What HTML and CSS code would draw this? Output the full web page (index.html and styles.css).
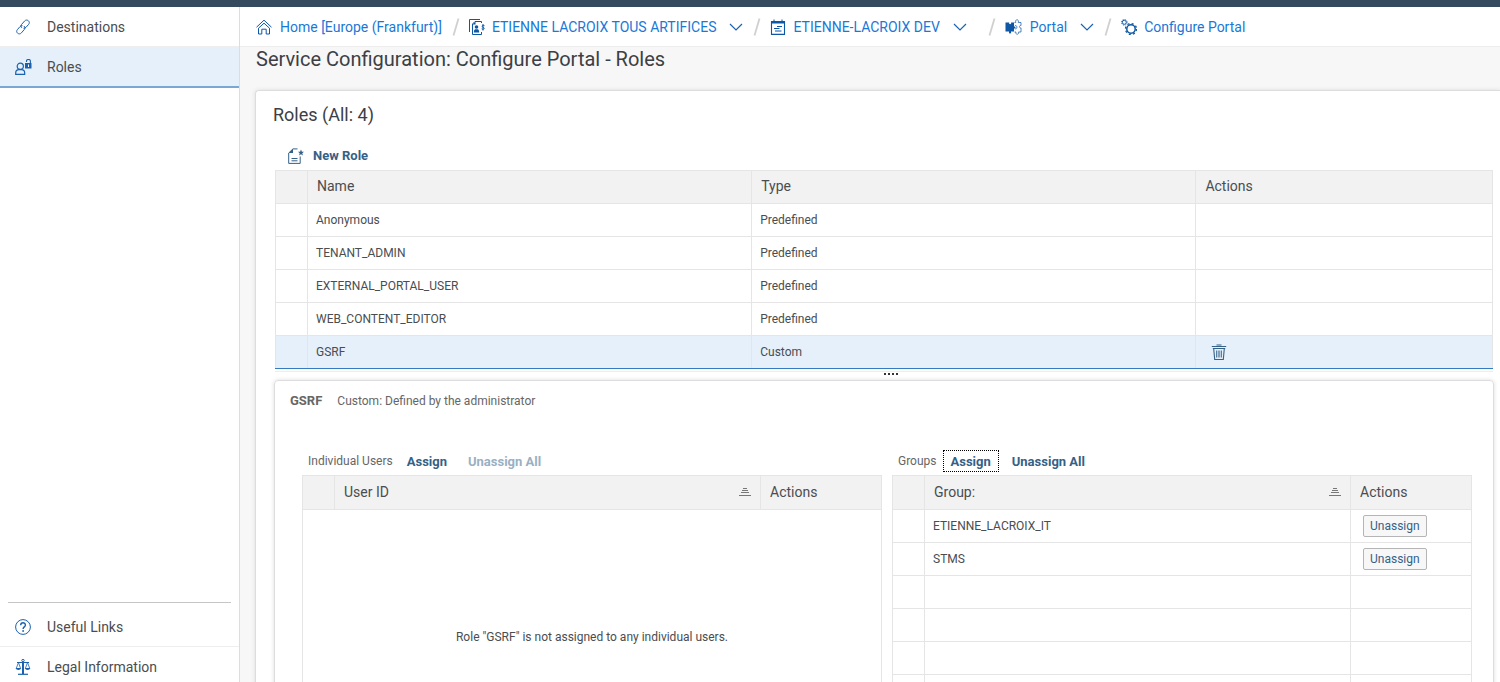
FILE: index.html
```html
<!DOCTYPE html>
<html lang="en">
<head>
<meta charset="utf-8">
<title>Configure Portal - Roles</title>
<link rel="stylesheet" href="styles.css">
</head>
<body>
<svg class="defs" aria-hidden="true">
  <symbol id="chevron" viewBox="0 0 14 8"><path d="M1 1l6 6 6-6" fill="none" stroke="currentColor" stroke-width="1.2"/></symbol>
  <symbol id="slash" viewBox="0 0 8 18"><path d="M1.500 17.500L6.500 .5" fill="none" stroke="currentColor" stroke-width="1.800"/></symbol>
  <symbol id="sort" viewBox="0 0 12 8"><path d="M4 .5h4M3 2.500h6M2 4.500h8M0 7.500h12" fill="none" stroke="currentColor"/></symbol>
</svg>
<div class="app">
  <div class="shell-bar"></div>
  <div class="body">
    <nav class="sidebar" aria-label="Services">
      <a class="nav-item" href="#">
        <svg class="icon" viewBox="0 0 16 16"><g fill="none" stroke="currentColor" stroke-linecap="round"><path d="M6.600 8.600c-1-1-.9-2.200 0-3.200l3-3.400c1.100-1.200 2.600-1.200 3.700-.3 1.200 1 1.300 2.500.3 3.700L11 8.300c-.6.700-1.300 1-2.100 1"/><path d="M9.200 7.300c1 1 .9 2.200.1 3.200l-2.900 3.400c-1 1.200-2.600 1.300-3.800.3-1.100-1-1.200-2.500-.2-3.600L5 7.600c.6-.7 1.200-1 2-1"/></g></svg>
        <span>Destinations</span>
      </a>
      <a class="nav-item selected" href="#" aria-current="page">
        <svg class="icon wide" viewBox="0 0 18 16"><path d="M.7 15.400v-1.300c0-2 1.500-3.400 3.300-3.400h2.400c1.800 0 3.300 1.400 3.300 3.400v1.300z" fill="none" stroke="currentColor" stroke-width="1.200"/><circle cx="5.300" cy="7.300" r="3.100" fill="none" stroke="currentColor" stroke-width="1.200"/><path d="M11.500 3V2C11.500-.1 15.400-.1 15.400 2v2" fill="none" stroke="currentColor" stroke-width="1.100"/><path fill="currentColor" d="M10 4h6.500v5.500H10z"/><path stroke="#fff" d="M13.500 5.500V8"/></svg>
        <span>Roles</span>
      </a>
      <div class="nav-footer">
        <a class="nav-item" href="#">
          <svg class="icon" viewBox="0 0 16 16"><circle cx="8" cy="8" r="7.400" fill="none" stroke="currentColor"/><path d="M5.700 6.200c0-3.200 4.700-3.100 4.700-.2 0 1.900-2.300 1.900-2.300 4" fill="none" stroke="currentColor" stroke-width="1.400"/><circle cx="8.100" cy="12" r=".9" fill="currentColor"/></svg>
          <span>Useful Links</span>
        </a>
        <a class="nav-item" href="#">
          <svg class="icon" viewBox="0 0 16 16"><circle cx="8" cy="1.500" r="1.200" fill="none" stroke="currentColor"/><g fill="none" stroke="currentColor"><path d="M2 3.500h12" /><path d="M3.500 3.500l-2.300 6M3.500 3.500l2.100 6M12.500 3.500l-2.200 6M12.500 3.500l2.300 6" stroke-width=".8"/><path d="M3 15.300h10" stroke-width="1.200"/><path d="M8 3v12" stroke-width="2"/></g><path fill="currentColor" d="M.8 9H6c0 2.600-5.200 2.600-5.200 0zM10 9h5.200c0 2.600-5.200 2.600-5.200 0z"/></svg>
          <span>Legal Information</span>
        </a>
      </div>
    </nav>
    <main class="main">
      <nav class="crumbs" aria-label="Breadcrumb">
        <a class="crumb home" href="#">
          <svg class="icon" viewBox="0 0 16 16"><g fill="none" stroke="currentColor"><path d="M.5 8.200L8 1.200l7.500 7"/><path d="M2.500 9.200L8 4.200l5.500 5v5.800h-3.300v-4.800H5.800V15H2.500z"/></g></svg>
          <span>Home [Europe (Frankfurt)]</span>
        </a>
        <svg class="slash"><use href="#slash"/></svg>
        <a class="crumb" href="#">
          <svg class="icon" viewBox="0 0 16 16"><g fill="none" stroke="currentColor"><path d="M.5 13V.5H11"/><path d="M12.500 4V2.500H6L3.500 5v10.500h9V13"/></g><path d="M6.500 2.500v3h-3z" fill="currentColor"/><circle cx="7.500" cy="8" r="1.800" fill="currentColor"/><path d="M4.800 13.500c0-2.800 1-3.300 2.700-3.300s2.700.5 2.700 3.300z" fill="currentColor"/><path d="M15.500 6.700c-2.800-1-3.100 1-1.600 1.500 2.100.6 1.600 2.700-1.200 1.700M14 5v6.500" fill="none" stroke="currentColor"/></svg>
          <span>ETIENNE LACROIX TOUS ARTIFICES</span>
        </a>
        <button class="drop" aria-label="Select account"><svg class="chevron"><use href="#chevron"/></svg></button>
        <svg class="slash"><use href="#slash"/></svg>
        <a class="crumb" href="#">
          <svg class="icon" viewBox="0 0 16 16"><path d="M1.500 2.500h13v12.900h-13z" fill="none" stroke="currentColor" stroke-width="1.100"/><path d="M1 2h14v2.500H1z" fill="currentColor"/><path d="M4 .5v2.500M12 .5v2.500" stroke="currentColor"/><path d="M7 7.500h5M4 9.500h5.500M5 12h6.500" stroke="currentColor"/></svg>
          <span>ETIENNE-LACROIX DEV</span>
        </a>
        <button class="drop last" aria-label="Select space"><svg class="chevron"><use href="#chevron"/></svg></button>
        <svg class="slash"><use href="#slash"/></svg>
        <a class="crumb" href="#">
          <svg class="icon wide" viewBox="0 0 18 16"><path fill="currentColor" d="M.5 3.500h3.700c-.7 2.300 2.600 2.300 1.900 0H9v4c2-.7 2 2.600 0 1.900V12.500H6c.9 2.800-2.800 2.800-1.900 0H.5z"/><path d="M9.500 3.500h1.300C9.600-.2 14.400-.2 13.300 3.500H16v3c-2-.6-2 3 0 2.400V13h-2.500c1 3-3.500 3-2.500 0H9.500M10 6.500c2.500-.5 2.500 3.800 0 3.400" fill="none" stroke="currentColor" stroke-width=".7"/></svg>
          <span>Portal</span>
        </a>
        <button class="drop" aria-label="Select service"><svg class="chevron"><use href="#chevron"/></svg></button>
        <svg class="slash"><use href="#slash"/></svg>
        <a class="crumb" href="#">
          <svg class="icon" viewBox="0 0 16 16"><g fill="none" stroke="currentColor"><circle cx="3.300" cy="3.300" r="2"/><circle cx="3.300" cy="3.300" r="2.900" stroke-width=".8" stroke-dasharray="1.200 1.080"/><circle cx="10" cy="10" r="4.200" stroke-width="1.500"/><circle cx="10" cy="10" r="5.500" stroke-width="1.300" stroke-dasharray="2 2.320"/></g></svg>
          <span>Configure Portal</span>
        </a>
      </nav>
      <h1 class="page-title">Service Configuration: Configure Portal - Roles</h1>
      <section class="card">
        <h2 class="card-title">Roles (All: 4)</h2>
        <div class="toolbar">
          <button class="link-btn with-icon">
            <svg class="icon" viewBox="0 0 16 16"><path d="M9.500 .9H5L.7 5v10.400h11.500V8.500" fill="none" stroke="currentColor"/><path d="M5 .8V5H.7z" fill="currentColor"/><path d="M3.500 10.500h6M3.500 12.800h6" stroke="currentColor"/><path fill="currentColor" d="M13 1.500l.9 2.200 2.100.1-1.700 1.500.6 2.200-1.900-1.200-1.900 1.200.6-2.200L10 3.800l2.100-.1z"/></svg>
            <span>New Role</span>
          </button>
        </div>
        <div class="table-wrap">
          <table class="grid roles">
            <colgroup><col class="c-sel"><col class="c-name"><col class="c-name"><col></colgroup>
            <thead><tr><th></th><th>Name</th><th>Type</th><th>Actions</th></tr></thead>
            <tbody>
              <tr><td></td><td>Anonymous</td><td>Predefined</td><td></td></tr>
              <tr><td></td><td>TENANT_ADMIN</td><td>Predefined</td><td></td></tr>
              <tr><td></td><td>EXTERNAL_PORTAL_USER</td><td>Predefined</td><td></td></tr>
              <tr><td></td><td>WEB_CONTENT_EDITOR</td><td>Predefined</td><td></td></tr>
              <tr class="row-selected"><td></td><td>GSRF</td><td>Custom</td><td class="cell-action"><button class="icon-btn" aria-label="Delete role"><svg class="icon" viewBox="0 0 16 16"><g fill="none" stroke="currentColor"><path d="M.8 2.500h14.400M5.500 1h5M1.800 4.500h12.400M2.700 4.500l1 11h8.600l1-11" stroke-width="1.100"/><path d="M5.500 6.500v7M7.200 6.500v7M8.800 6.500v7M10.500 6.500v7" stroke-width=".8"/></g></svg></button></td></tr>
            </tbody>
          </table>
        </div>
        <div class="splitter"><i></i><i></i><i></i><i></i></div>
        <section class="panel">
          <div class="panel-head"><b>GSRF</b><span>Custom: Defined by the administrator</span></div>
          <div class="assignments">
            <div class="assign-col">
              <div class="assign-bar"><span class="assign-label">Individual Users</span><button class="link-btn">Assign</button><button class="link-btn" disabled>Unassign All</button></div>
              <table class="grid">
                <colgroup><col class="c-sel"><col><col class="c-act"></colgroup>
                <thead><tr><th></th><th><div class="sortable">User ID<svg class="sort"><use href="#sort"/></svg></div></th><th>Actions</th></tr></thead>
                <tbody><tr><td class="empty" colspan="3">Role "GSRF" is not assigned to any individual users.</td></tr></tbody>
              </table>
            </div>
            <div class="assign-col">
              <div class="assign-bar"><span class="assign-label">Groups</span><button class="link-btn focused">Assign</button><button class="link-btn">Unassign All</button></div>
              <table class="grid">
                <colgroup><col class="c-sel"><col><col class="c-act"></colgroup>
                <thead><tr><th></th><th><div class="sortable">Group:<svg class="sort"><use href="#sort"/></svg></div></th><th>Actions</th></tr></thead>
                <tbody>
                  <tr><td></td><td>ETIENNE_LACROIX_IT</td><td class="cell-btn"><button class="btn">Unassign</button></td></tr>
                  <tr><td></td><td>STMS</td><td class="cell-btn"><button class="btn">Unassign</button></td></tr>
                  <tr><td></td><td></td><td></td></tr>
                  <tr><td></td><td></td><td></td></tr>
                  <tr><td></td><td></td><td></td></tr>
                  <tr><td></td><td></td><td></td></tr>
                </tbody>
              </table>
            </div>
          </div>
        </section>
      </section>
    </main>
  </div>
</div>
</body>
</html>
```
FILE: styles.css
```css
* { box-sizing: border-box; }

body {
  margin: 0;
  font-family: Roboto, "Liberation Sans", sans-serif;
  font-size: 12px;
  color: #4a4d50;
  overflow: hidden;
}

a { color: inherit; text-decoration: none; }

button {
  margin: 0;
  padding: 0;
  border: 0;
  background: none;
  font: inherit;
  color: inherit;
}

.defs { display: none; }
.icon { width: 16px; height: 16px; flex: none; }
.icon.wide { width: 18px; }

.app { display: flex; flex-direction: column; height: 100vh; overflow: hidden; }
.shell-bar { flex: none; height: 7px; background: #354a5f; }
.body { display: flex; flex: 1; min-height: 0; }

/* Side navigation */
.sidebar {
  display: flex;
  flex-direction: column;
  flex: none;
  width: 240px;
  background: #fff;
  border-right: 1px solid #ddd;
}

.nav-item {
  display: flex;
  align-items: center;
  height: 40px;
  padding-left: 15px;
  border-bottom: 1px solid #eee;
  font-size: 14px;
}

.nav-item .icon { margin-right: 16px; color: #1a62b0; }
.nav-item .icon.wide { margin-right: 14px; }
.nav-item.selected { height: 41px; background: #e5f0fa; border-bottom: 2px solid #7ba7d4; }

.nav-footer { margin-top: auto; margin-bottom: -5px; }
.nav-footer::before {
  content: "";
  display: block;
  height: 1px;
  margin: 0 8px 4px;
  background: #c6c6c6;
}

/* Breadcrumb */
.main { flex: 1; min-width: 0; background: #f7f7f7; }

.crumbs {
  display: flex;
  align-items: center;
  height: 40px;
  padding-left: 16px;
  background: #fff;
  border-bottom: 1px solid #eee;
  font-size: 14px;
  color: #1a78d6;
}

.crumb { display: flex; align-items: center; gap: 7px; }
.crumb.home { gap: 8px; }
.crumb .icon { color: #0d57a5; }
.slash { width: 8px; height: 18px; margin: 0 9px 0 10px; color: #d0d0d0; }
.drop { display: flex; margin-left: 13px; color: #1a62b0; }
.drop.last { margin-right: 11px; }
.chevron { width: 14px; height: 8px; }

.page-title {
  margin: 0 0 19px 16px;
  font-size: 20px;
  font-weight: 400;
  line-height: 24px;
  color: #3c4045;
}

/* Roles card */
.card {
  margin-left: 15px;
  padding: 11px 6px 0 19px;
  background: #fff;
  border: 1px solid #ddd;
  border-right: 0;
  border-radius: 4px 0 0 0;
  box-shadow: 0 0 4px #ddd;
}

.card-title {
  margin: 0 0 13px -2px;
  font-size: 18px;
  font-weight: 400;
  line-height: 26px;
  color: #3c4045;
}

.toolbar { display: flex; height: 29px; padding: 0 13px; }
.link-btn { font-size: 13px; font-weight: 700; color: #346187; }
.link-btn:disabled { color: #9ab0c3; }
.link-btn.with-icon { display: flex; align-items: center; gap: 9px; }

.grid { width: 100%; border-collapse: collapse; table-layout: fixed; }
.grid th, .grid td { border: 1px solid #e5e5e5; text-align: left; }
.grid th {
  height: 34px;
  padding: 0 9px 2px;
  background: #f2f2f2;
  font-size: 14px;
  font-weight: 400;
}
.grid.roles th { height: 33px; }
.grid td { height: 33px; padding: 0 8px; }
.c-sel { width: 32px; }
.c-name { width: 36.5%; }
.c-act { width: 121px; }

.table-wrap { border-bottom: 1px solid #eee; padding-bottom: 2px; margin-right: 1px; }
.row-selected { background: #e5f0fa; }
.grid .row-selected td { border-bottom-color: #347cc0; }
.grid .cell-action { padding-left: 15px; }
.icon-btn { display: flex; color: #346187; }

.splitter { display: flex; justify-content: center; gap: 2px; padding: 1px 0 5px 12px; }
.splitter i { width: 2px; height: 2px; background: #333; }

/* Role details */
.panel {
  margin-left: -1px;
  padding: 10px 21px 0 27px;
  border: 1px solid #ddd;
  border-radius: 4px;
  box-shadow: 0 0 4px #ddd;
}

.panel-head {
  display: flex;
  gap: 15px;
  margin-left: -12px;
  line-height: 20px;
  color: #666;
}
.panel-head b { font-size: 13px; }

.assignments { display: grid; grid-template-columns: 1fr 1fr; gap: 10px; margin-top: 37px; }
.assign-bar { display: flex; align-items: center; height: 26px; margin-bottom: 1px; }
.assign-label { padding: 0 6px; color: #666; }
.assign-bar .link-btn { height: 22px; padding: 0 7px; border: 1px solid transparent; margin-right: 5px; }
.assign-bar .link-btn.focused { border: 1px dotted #000; }

.sortable { display: flex; align-items: center; justify-content: space-between; }
.sort { width: 12px; height: 8px; color: #777; }
.grid .empty { height: 254px; text-align: center; }
.grid .cell-btn { padding-left: 12px; }
.btn {
  display: block;
  height: 22px;
  padding: 0 6px;
  border: 1px solid #b5b5b5;
  border-radius: 2px;
  background: #f7f7f7;
  color: #346187;
}
```
